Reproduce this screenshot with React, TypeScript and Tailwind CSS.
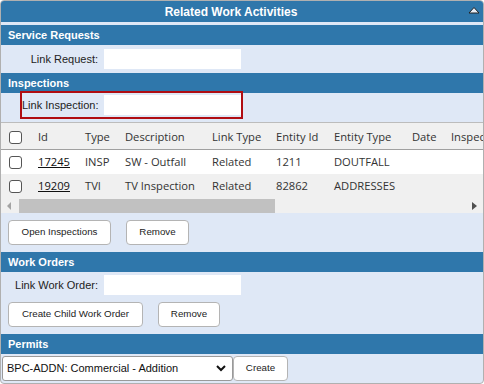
import React from 'react';

const SectionHeader = ({ title }: { title: string }) => (
  <div className="h-[20px] bg-[#2f77ab] flex items-center pl-[7px] text-[11px] font-bold text-white">{title}</div>
);

const Btn = ({ label, w }: { label: string; w: string }) => (
  <button className={`h-[25px] ${w} bg-white border border-[#b4b4b4] rounded-[4px] text-[9.75px] text-[#222] flex items-center justify-center whitespace-nowrap`}>
    {label}
  </button>
);

const Checkbox = () => <div className="w-[13px] h-[13px] border border-[#555] rounded-[3px] bg-white" />;

const rows = [
  { id: '17245', type: 'INSP', desc: 'SW - Outfall', link: 'Related', eid: '1211', etype: 'DOUTFALL', bg: 'bg-white', h: 'h-[24px]' },
  { id: '19209', type: 'TVI', desc: 'TV Inspection', link: 'Related', eid: '82862', etype: 'ADDRESSES', bg: 'bg-[#f0f0f0]', h: 'h-[25px]' },
];

export default function App() {
  return (
    <div className="w-[484px] h-[384px] bg-[#dfe8f6] border border-[#b0b0b0] rounded-[4px] overflow-hidden text-[11px] text-[#222]" style={{ fontFamily: '"Liberation Sans", Arial, sans-serif' }}>
      {/* main header */}
      <div className="h-[21px] bg-[#2f77ab] flex items-center relative">
        <div className="flex-1 text-center pr-[22px] text-[12px] font-bold text-white">Related Work Activities</div>
        <svg className="absolute right-[3px] top-[5px]" width="12" height="8" viewBox="0 0 12 8">
          <polygon points="1,7 6,1.5 11,7" fill="#e9eef6" stroke="#222" strokeWidth="1" />
        </svg>
      </div>
      <div className="h-[3px]" />

      <SectionHeader title="Service Requests" />
      <div className="h-[28px] flex items-center">
        <div className="w-[97px] text-right whitespace-nowrap">Link Request:</div>
        <div className="ml-[6px] w-[137px] h-[20px] bg-white" />
      </div>

      <SectionHeader title="Inspections" />
      <div className="h-[29px] flex items-start">
        <div className="ml-[19px] -mt-[2px] w-[223px] h-[28px] border-2 border-[#b00d12] flex items-center">
          <div className="w-[76px] text-right whitespace-nowrap">Link Inspection:</div>
          <div className="ml-[6px] w-[137px] h-[20px] bg-white" />
        </div>
      </div>

      {/* grid */}
      <div className="bg-[#f0f0f0] border-t border-[#bcbcbc] text-[#333] text-[11.2px] overflow-hidden" style={{ fontFamily: '"Open Sans", "Noto Sans", sans-serif' }}>
        <div className="h-[27px] flex items-center pt-[2px] border-b border-[#a0a0a0] whitespace-nowrap">
          <div className="w-[37px] pl-[8px]"><Checkbox /></div>
          <div className="w-[47px]">Id</div>
          <div className="w-[40px]">Type</div>
          <div className="w-[87px]">Description</div>
          <div className="w-[64px]">Link Type</div>
          <div className="w-[58px]">Entity Id</div>
          <div className="w-[78px]">Entity Type</div>
          <div className="w-[39px]">Date</div>
          <div className="w-[32px] overflow-hidden">Inspection</div>
        </div>
        {rows.map((r) => (
          <div key={r.id} className={`${r.h} flex items-center whitespace-nowrap ${r.bg}`}>
            <div className="w-[37px] pl-[8px]"><Checkbox /></div>
            <div className="w-[47px]"><span className="underline text-[#111]">{r.id}</span></div>
            <div className="w-[40px]">{r.type}</div>
            <div className="w-[87px]">{r.desc}</div>
            <div className="w-[64px]">{r.link}</div>
            <div className="w-[58px]">{r.eid}</div>
            <div className="w-[78px]">{r.etype}</div>
            <div className="w-[39px]" />
          </div>
        ))}
        <div className="h-[14px] flex items-center">
          <svg className="ml-[6px]" width="5" height="8" viewBox="0 0 5 8"><polygon points="4,0 0,4 4,8" fill="#a3a3a3" /></svg>
          <div className="ml-[7px] w-[256px] h-[14px] bg-[#c1c1c1]" />
          <div className="flex-1" />
          <svg className="mr-[6px]" width="5" height="8" viewBox="0 0 5 8"><polygon points="0,0 5,4 0,8" fill="#505050" /></svg>
        </div>
      </div>

      <div className="h-[39px] flex items-start pt-[7px] gap-[15px] pl-[7px]">
        <Btn label="Open Inspections" w="w-[103px]" />
        <Btn label="Remove" w="w-[63px]" />
      </div>

      <SectionHeader title="Work Orders" />
      <div className="h-[26px] flex items-center">
        <div className="w-[97px] text-right whitespace-nowrap">Link Work Order:</div>
        <div className="ml-[6px] w-[137px] h-[20px] bg-white" />
      </div>
      <div className="h-[36px] flex items-start pt-[4px] gap-[15px] pl-[7px]">
        <Btn label="Create Child Work Order" w="w-[135px]" />
        <Btn label="Remove" w="w-[62px]" />
      </div>

      <SectionHeader title="Permits" />
      <div className="h-[29px] flex items-center">
        <div className="ml-[1px] w-[231px] h-[25px] bg-white border border-[#9a9a9a] rounded-[3px] flex items-center px-[4px] text-[11px] text-[#111]">
          <span className="flex-1 whitespace-nowrap">BPC-ADDN: Commercial - Addition</span>
          <svg className="mr-[2px]" width="10" height="7" viewBox="0 0 10 7"><polyline points="1,1 5,5 9,1" fill="none" stroke="#111" strokeWidth="2" /></svg>
        </div>
        <Btn label="Create" w="w-[55px]" />
      </div>
    </div>
  );
}
